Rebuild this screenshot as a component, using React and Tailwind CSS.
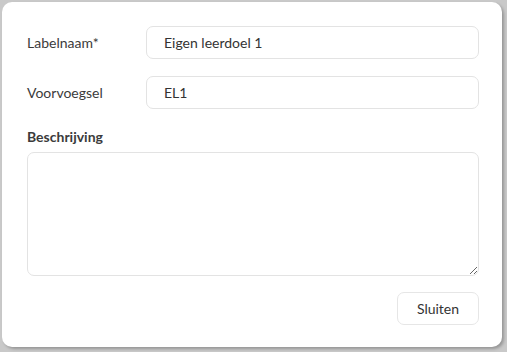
import React from 'react'

export default function App() {
    const [name, setName] = React.useState('Eigen leerdoel 1')
    const [prefix, setPrefix] = React.useState('EL1')
    const [desc, setDesc] = React.useState('')

    return (
        <div className="w-[507px] h-[352px] bg-[#c9c9c9] pt-[2px] pl-[2px] font-['Lato',sans-serif] text-[#3b3b3b]">
            <div className="w-[500px] h-[345px] bg-white rounded-[10px] shadow-[2px_2px_3px_rgba(0,0,0,0.25)] pl-[25px] pr-[23px] pt-[24px]">
                <div className="flex items-center h-[33px]">
                    <label className="w-[119px] text-[14px]">Labelnaam*</label>
                    <input
                        className="flex-1 h-[33px] rounded-[7px] border border-[#e3e3e3] px-[17px] text-[14px] text-[#333] outline-none"
                        value={name}
                        onChange={e => setName(e.target.value)}
                    />
                </div>
                <div className="flex items-center h-[33px] mt-[17px]">
                    <label className="w-[119px] text-[14px]">Voorvoegsel</label>
                    <input
                        className="flex-1 h-[33px] rounded-[7px] border border-[#e3e3e3] px-[17px] text-[14px] text-[#333] outline-none"
                        value={prefix}
                        onChange={e => setPrefix(e.target.value)}
                    />
                </div>
                <div className="mt-[18px] text-[14px] font-bold leading-[20px]">Beschrijving</div>
                <textarea
                    className="block w-full h-[124px] mt-[5px] rounded-[7px] border border-[#e3e3e3] px-[12px] py-[8px] text-[14px] outline-none"
                    value={desc}
                    onChange={e => setDesc(e.target.value)}
                />
                <div className="flex justify-end mt-[16px]">
                    <button className="w-[82px] h-[33px] rounded-[7px] border border-[#e6e6e6] bg-white text-[14px] text-[#333]">
                        Sluiten
                    </button>
                </div>
            </div>
        </div>
    )
}
